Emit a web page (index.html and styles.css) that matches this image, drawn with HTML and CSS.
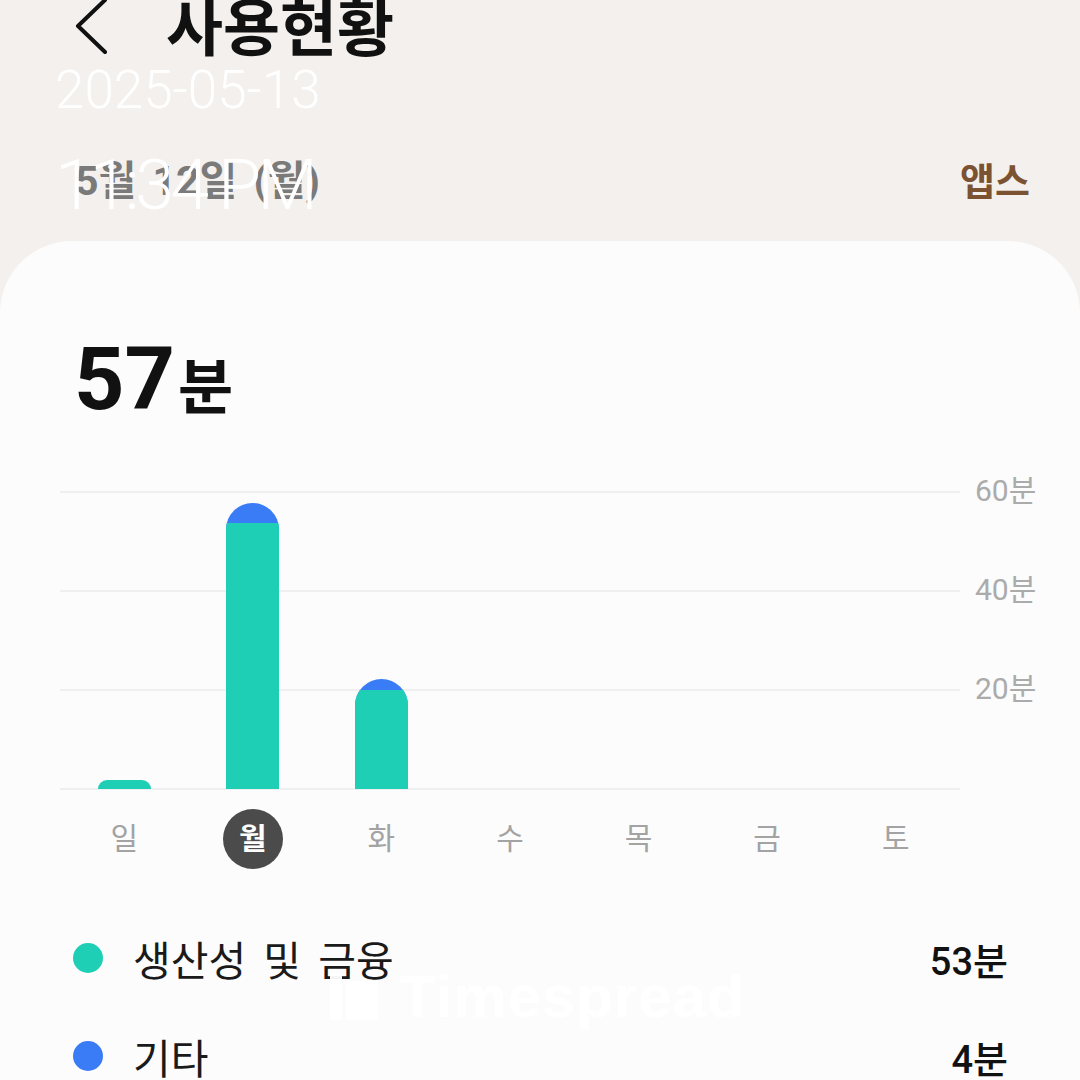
FILE: index.html
```html
<!DOCTYPE html>
<html lang="ko">

<head>
  <meta charset="utf-8">
  <title>사용현황</title>
  <link rel="stylesheet" href="styles.css">
</head>

<body>
  <header class="topbar">
    <svg class="back" width="40" height="60" viewBox="0 0 40 60">
      <polyline points="34,3 7,29 34,55" />
    </svg>
    <h1>사용현황</h1>
  </header>

  <nav class="subbar">
    <span class="date">5월 12일 (월)</span>
    <span class="tab">앱스</span>
  </nav>

  <main class="card">
    <div class="total"><b>57</b><span>분</span></div>

    <section class="chart">
      <div class="plot">
        <div class="col"><div class="bar" style="height:9px"><i style="height:9px"></i></div></div>
        <div class="col"><div class="bar" style="height:286px"><i style="height:266px"></i></div></div>
        <div class="col"><div class="bar" style="height:110px"><i style="height:99px"></i></div></div>
        <div class="col"></div>
        <div class="col"></div>
        <div class="col"></div>
        <div class="col"></div>
      </div>
      <div class="axis">
        <span>60분</span>
        <span>40분</span>
        <span>20분</span>
      </div>
      <div class="days">
        <span>일</span>
        <span class="today">월</span>
        <span>화</span>
        <span>수</span>
        <span>목</span>
        <span>금</span>
        <span>토</span>
      </div>
    </section>

    <ul class="legend">
      <li><i class="dot green"></i><span class="name">생산성 및 금융</span><span class="val">53분</span></li>
      <li><i class="dot blue"></i><span class="name">기타</span><span class="val">4분</span></li>
    </ul>
  </main>

  <!-- stamp and watermark lie over the page -->
  <div class="stamp">
    <div class="stamp-date">2025-05-13</div>
    <div class="stamp-time">11:34 PM</div>
  </div>
  <div class="watermark">
    <span class="wm-icon"><i></i><i></i></span>
    <span>Timespread</span>
  </div>
</body>

</html>
```

FILE: styles.css
```css
body {
  margin: 0;
  height: 1080px;
  overflow: hidden;
  position: relative;
  background-color: #f3f0ed;
  font-family: Roboto, "Noto Sans CJK KR", sans-serif;
  color: #111;
}

.topbar {
  display: flex;
  align-items: center;
  height: 60px;
  padding-left: 71px;
}

.back {
  margin-top: -6px;
}

.back polyline {
  fill: none;
  stroke: #111;
  stroke-width: 4;
  stroke-linecap: round;
  stroke-linejoin: round;
}

h1 {
  margin: 0 0 0 55px;
  font-size: 62px;
  line-height: 1;
  font-weight: 700;
}

.subbar {
  display: flex;
  justify-content: space-between;
  align-items: center;
  margin-top: 101px;
  padding: 0 50px 0 75px;
  line-height: 1;
}

.date {
  font-size: 41px;
  font-weight: 700;
  color: #7a7a7a;
  word-spacing: 6px;
}

.tab {
  font-size: 38px;
  font-weight: 700;
  color: #7b5232;
}

.card {
  margin-top: 39px;
  height: 900px;
  background-color: #fcfcfc;
  border-radius: 72px 72px 0 0;
  padding: 94px 72px 0 60px;
}

.total {
  display: flex;
  align-items: baseline;
  margin-left: 14px;
  line-height: 1;
}

.total b {
  font-size: 88px;
  font-weight: 700;
}

.total span {
  margin-left: 3px;
  font-size: 60px;
  font-weight: 700;
}

.chart {
  display: grid;
  grid-template-columns: 900px 1fr;
  margin-top: 68px;
}

.plot {
  display: grid;
  grid-template-columns: repeat(7, 1fr);
  height: 299px;
  background: repeating-linear-gradient(to bottom, #efefef 0 2px, transparent 2px 99px);
}

.col {
  display: flex;
  justify-content: center;
  align-items: flex-end;
  padding-bottom: 1px;
}

.bar {
  display: flex;
  align-items: flex-end;
  width: 53px;
  overflow: hidden;
  border-radius: 26.5px 26.5px 0 0;
  background-color: #3a7bf6;
}

.bar i {
  display: block;
  width: 100%;
  background-color: #1ecfb6;
}

.axis {
  display: flex;
  flex-direction: column;
  margin-top: -17px;
  padding-left: 15px;
  white-space: nowrap;
}

.axis span {
  height: 99px;
  line-height: 34px;
  font-size: 30px;
  color: #ababab;
}

.days {
  display: grid;
  grid-template-columns: repeat(7, 1fr);
  margin-top: 19px;
  height: 60px;
}

.days span {
  justify-self: center;
  width: 60px;
  height: 60px;
  line-height: 60px;
  text-align: center;
  font-size: 30px;
  color: #a3a3a3;
}

.days span.today {
  border-radius: 50%;
  background-color: #4b4b4b;
  color: #fff;
  font-weight: 700;
}

.legend {
  list-style: none;
  margin: 40px 0 0 13px;
  padding: 0;
}

.legend li {
  display: flex;
  align-items: center;
  height: 98px;
}

.dot {
  width: 30px;
  height: 30px;
  border-radius: 50%;
  margin-right: 30px;
}

.dot.green {
  background-color: #1ecfb6;
}

.dot.blue {
  background-color: #3a7bf6;
}

.name {
  flex: 1;
  font-size: 41px;
  color: #1a1a1a;
  word-spacing: 7px;
}

.val {
  font-size: 38px;
  font-weight: 500;
  color: #111;
}

.stamp {
  position: absolute;
  left: 55px;
  top: 64px;
  color: #fff;
  font-family: Roboto, sans-serif;
  font-weight: 300;
  line-height: 1;
}

.stamp-date {
  font-size: 53px;
}

.stamp-time {
  margin-top: 33px;
  font-size: 70px;
  letter-spacing: -4px;
}

.watermark {
  position: absolute;
  left: 330px;
  top: 967px;
  display: flex;
  align-items: flex-end;
  gap: 21px;
  color: rgba(255, 255, 255, 0.95);
  font-family: "Liberation Sans", Arial, sans-serif;
  font-weight: 700;
  font-size: 60px;
  line-height: 1;
  letter-spacing: 1px;
}

.wm-icon {
  display: flex;
  align-items: flex-end;
  gap: 4px;
  height: 47px;
  margin-bottom: 7px;
}

.wm-icon i {
  display: block;
  width: 12px;
  height: 47px;
  background-color: rgba(255, 255, 255, 0.95);
}

.wm-icon i + i {
  width: 32px;
  height: 39px;
}
```
